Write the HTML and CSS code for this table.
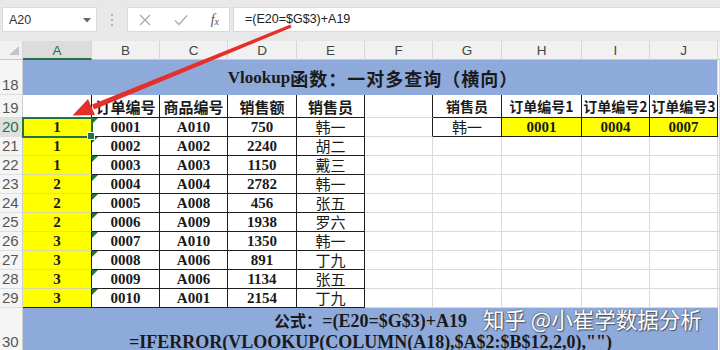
FILE: index.html
```html
<!DOCTYPE html>
<html lang="zh-CN">
<head>
<meta charset="utf-8">
<title>Vlookup</title>
<link rel="stylesheet" href="styles.css">
</head>
<body>
<div class="app">
  <div class="fbar">
    <div class="namebox"><span>A20</span><svg class="dd" width="8" height="5" viewBox="0 0 8 5"><path d="M0 0H8L4 4.5Z"/></svg></div>
    <div class="grip"><i></i><i></i><i></i></div>
    <div class="btns">
      <svg width="12" height="12" viewBox="0 0 12 12"><path d="M1 1L11 11M11 1L1 11"/></svg>
      <svg width="14" height="12" viewBox="0 0 14 12"><path d="M1 6.5L5 10.5L13 1.5"/></svg>
      <span class="fx">f<sub>x</sub></span>
    </div>
    <div class="formula">=(E20=$G$3)+A19</div>
  </div>

  <div class="sheet">
    <div class="corner"><span class="ctri"></span></div>
    <div class="ch on">A</div><div class="ch">B</div><div class="ch">C</div><div class="ch">D</div><div class="ch">E</div><div class="ch">F</div><div class="ch">G</div><div class="ch">H</div><div class="ch">I</div><div class="ch">J</div><div class="ch end"></div>

    <div class="rh">18</div>
    <div class="title">Vlookup<span class="cj">函数：一对多查询（横向）</span></div>
    <div class="c"></div>

    <div class="rh">19</div>
    <div class="c br"></div>
    <div class="c bk h">订单编号</div><div class="c bk h">商品编号</div><div class="c bk h">销售额</div><div class="c bk h">销售员</div>
    <div class="c br"></div>
    <div class="c bk h2">销售员</div><div class="c bk h2">订单编号1</div><div class="c bk h2">订单编号2</div><div class="c bk h2">订单编号3</div>
    <div class="c"></div>

    <div class="rh on">20</div>
    <div class="c y br n sel">1</div>
    <div class="c bk n tri">0001</div><div class="c bk n">A010</div><div class="c bk n">750</div><div class="c bk nm">韩一</div>
    <div class="c br"></div>
    <div class="c bk nm">韩一</div><div class="c bk y n">0001</div><div class="c bk y n">0004</div><div class="c bk y n">0007</div>
    <div class="c"></div>

    <div class="rh">21</div>
    <div class="c y br n">1</div>
    <div class="c bk n tri">0002</div><div class="c bk n">A002</div><div class="c bk n">2240</div><div class="c bk nm">胡二</div>
    <div class="c"></div><div class="c"></div><div class="c"></div><div class="c"></div><div class="c"></div><div class="c"></div>

    <div class="rh">22</div>
    <div class="c y br n">1</div>
    <div class="c bk n tri">0003</div><div class="c bk n">A003</div><div class="c bk n">1150</div><div class="c bk nm">戴三</div>
    <div class="c"></div><div class="c"></div><div class="c"></div><div class="c"></div><div class="c"></div><div class="c"></div>

    <div class="rh">23</div>
    <div class="c y br n">2</div>
    <div class="c bk n tri">0004</div><div class="c bk n">A004</div><div class="c bk n">2782</div><div class="c bk nm">韩一</div>
    <div class="c"></div><div class="c"></div><div class="c"></div><div class="c"></div><div class="c"></div><div class="c"></div>

    <div class="rh">24</div>
    <div class="c y br n">2</div>
    <div class="c bk n tri">0005</div><div class="c bk n">A008</div><div class="c bk n">456</div><div class="c bk nm">张五</div>
    <div class="c"></div><div class="c"></div><div class="c"></div><div class="c"></div><div class="c"></div><div class="c"></div>

    <div class="rh">25</div>
    <div class="c y br n">2</div>
    <div class="c bk n tri">0006</div><div class="c bk n">A009</div><div class="c bk n">1938</div><div class="c bk nm">罗六</div>
    <div class="c"></div><div class="c"></div><div class="c"></div><div class="c"></div><div class="c"></div><div class="c"></div>

    <div class="rh">26</div>
    <div class="c y br n">3</div>
    <div class="c bk n tri">0007</div><div class="c bk n">A010</div><div class="c bk n">1350</div><div class="c bk nm">韩一</div>
    <div class="c"></div><div class="c"></div><div class="c"></div><div class="c"></div><div class="c"></div><div class="c"></div>

    <div class="rh">27</div>
    <div class="c y br n">3</div>
    <div class="c bk n tri">0008</div><div class="c bk n">A006</div><div class="c bk n">891</div><div class="c bk nm">丁九</div>
    <div class="c"></div><div class="c"></div><div class="c"></div><div class="c"></div><div class="c"></div><div class="c"></div>

    <div class="rh">28</div>
    <div class="c y br n">3</div>
    <div class="c bk n tri">0009</div><div class="c bk n">A006</div><div class="c bk n">1134</div><div class="c bk nm">张五</div>
    <div class="c"></div><div class="c"></div><div class="c"></div><div class="c"></div><div class="c"></div><div class="c"></div>

    <div class="rh">29</div>
    <div class="c y br bb n">3</div>
    <div class="c bk n tri">0010</div><div class="c bk n">A001</div><div class="c bk n">2154</div><div class="c bk nm">丁九</div>
    <div class="c"></div><div class="c"></div><div class="c"></div><div class="c"></div><div class="c"></div><div class="c"></div>

    <div class="rh">30</div>
    <div class="foot">
      <div class="l1"><span class="cs">公式：</span>=(E20=$G$3)+A19</div>
      <div class="l2">=IFERROR(VLOOKUP(COLUMN(A18),$A$2:$B$12,2,0),"")</div>
    </div>
    <div class="c"></div>
  </div>

  <svg class="arrow" width="720" height="350" viewBox="0 0 720 350">
    <polygon points="290.4,24.6 291.6,27.4 93.9,109.6 92.1,104.4"/>
    <polygon points="72.5,115.5 95,115 88,99"/>
  </svg>
  <div class="wm">知乎 @小崔学数据分析</div>
</div>
</body>
</html>
```

FILE: styles.css
```css
* { box-sizing: border-box; }
html, body { margin: 0; padding: 0; }
body {
  width: 720px;
  height: 350px;
  overflow: hidden;
  background: #fff;
  font-family: "Liberation Sans", "Noto Sans CJK SC", sans-serif;
  color: #1a1a1a;
}
.app { position: relative; width: 720px; height: 350px; overflow: hidden; }

/* formula bar */
.fbar {
  height: 41px;
  background: #e8e8e8;
  display: flex;
  align-items: flex-start;
  padding: 7px 0 0 2px;
}
.namebox {
  width: 95px;
  height: 25px;
  background: #fff;
  border: 1px solid #dadada;
  display: flex;
  align-items: center;
  justify-content: space-between;
  padding: 0 5px 0 6px;
  font-size: 12.5px;
  color: #333;
}
.dd { fill: #666; margin-top: 1px; }
.grip {
  width: 30px;
  height: 25px;
  display: flex;
  flex-direction: column;
  align-items: center;
  justify-content: center;
  gap: 3px;
}
.grip i { width: 2px; height: 2px; background: #b4b4b4; display: block; }
.btns {
  width: 103px;
  height: 25px;
  background: #fff;
  border: 1px solid #dadada;
  display: flex;
  align-items: center;
  padding: 0 10px 0 11px;
  justify-content: space-between;
}
.btns svg { fill: none; stroke: #ababab; stroke-width: 1.3; }
.fx {
  font-family: "Liberation Serif", serif;
  font-style: italic;
  font-size: 14px;
  color: #555;
  line-height: 1;
}
.fx sub { font-size: 10px; vertical-align: -1px; }
.formula {
  flex: 1;
  margin-left: 3px;
  height: 25px;
  background: #fff;
  border: 1px solid #dadada;
  border-right: none;
  padding-left: 11px;
  line-height: 23px;
  font-size: 12.5px;
  color: #222;
}

/* sheet grid */
.sheet {
  display: grid;
  grid-template-columns: 23px 69px 68px 68px 69px 68px 68px 69px 80px 68px 68px 2px;
  grid-template-rows: 19px 35px 23px repeat(10, 19px) 44px;
}
.corner, .ch {
  background: #f1f1f1;
  border-right: 1px solid #d6d6d6;
  border-bottom: 1px solid #c9c9c9;
}
.corner { position: relative; }
.ctri {
  position: absolute;
  right: 3px;
  bottom: 4px;
  width: 0;
  height: 0;
  border-left: 10px solid transparent;
  border-bottom: 9px solid #c4c4c4;
}
.ch {
  display: flex;
  align-items: center;
  justify-content: center;
  font-size: 13.5px;
  color: #444;
  padding-top: 1px;
}
.ch.on {
  background: #dcdcdc;
  color: #217346;
  border-bottom: 2px solid #217346;
}
.ch.end { border-right: none; }

.rh {
  background: #f5f5f5;
  border-right: 1px solid #cfcfcf;
  border-bottom: 1px solid #dedede;
  font-size: 15px;
  color: #555;
  display: flex;
  align-items: flex-end;
  padding: 0 0 0 2px;
  line-height: 18px;
}
.rh.on { background: #e0e0e0; color: #217346; }

.c {
  position: relative;
  background: #fff;
  border-right: 1px solid #dadada;
  border-bottom: 1px solid #dadada;
  display: flex;
  align-items: center;
  justify-content: center;
  white-space: nowrap;
}
.y { background: #ffff00; border-bottom-color: #d8d8a0; }
.br { border-right-color: #1e1e1e; }
.bb { border-bottom-color: #1e1e1e; }
.bk { border-right-color: #1e1e1e; border-bottom-color: #1e1e1e; }

.n {
  font-family: "Liberation Serif", serif;
  font-weight: bold;
  font-size: 15px;
  padding-top: 1px;
}
.h {
  font-family: "Noto Sans CJK SC", sans-serif;
  font-weight: bold;
  font-size: 15px;
  line-height: 1;
}
.h2 {
  font-family: "Noto Sans CJK SC", sans-serif;
  font-weight: bold;
  font-size: 14px;
  line-height: 1;
}
.nm {
  font-family: "Noto Sans CJK SC", sans-serif;
  font-size: 15px;
  line-height: 1;
  padding-bottom: 1px;
}
.tri::before {
  content: "";
  position: absolute;
  left: 0;
  top: 0;
  border-top: 6px solid #1f7a38;
  border-right: 6px solid transparent;
}
.sel {
  outline: 2px solid #217346;
  outline-offset: -1px;
  z-index: 2;
}
.sel::after {
  content: "";
  position: absolute;
  right: -4px;
  bottom: -4px;
  width: 6px;
  height: 6px;
  background: #217346;
  border: 1px solid #fff;
}

.title {
  grid-column: span 10;
  background: #8eaadb;
  border-right: 1px solid #dadada;
  display: flex;
  align-items: center;
  justify-content: center;
  font-family: "Liberation Serif", "Noto Sans CJK SC", serif;
  font-weight: bold;
  font-size: 17px;
  color: #1a1a1a;
  padding-left: 6px;
}
.title .cj {
  font-family: "Noto Sans CJK SC", sans-serif;
  font-size: 18px;
  letter-spacing: 1px;
}
.foot {
  grid-column: span 10;
  background: #8eaadb;
  font-family: "Liberation Serif", "Noto Sans CJK SC", serif;
  font-weight: bold;
  font-size: 18px;
  line-height: 21px;
  text-align: center;
  padding-top: 2px;
  color: #1a1a1a;
  white-space: nowrap;
}
.foot .cs {
  font-family: "Noto Sans CJK SC", sans-serif;
  font-size: 16px;
}

.arrow {
  position: absolute;
  left: 0;
  top: 0;
  pointer-events: none;
  z-index: 5;
}
.arrow polygon { fill: #e5302a; }
.wm {
  position: absolute;
  left: 483px;
  top: 304px;
  font-family: "Noto Sans CJK SC", sans-serif;
  font-size: 21.5px;
  line-height: 30px;
  color: #fff;
  text-shadow: 0 0 2px rgba(60, 60, 60, 0.8), 1px 1px 1px rgba(40, 40, 40, 0.6);
  z-index: 6;
  white-space: nowrap;
}
```
